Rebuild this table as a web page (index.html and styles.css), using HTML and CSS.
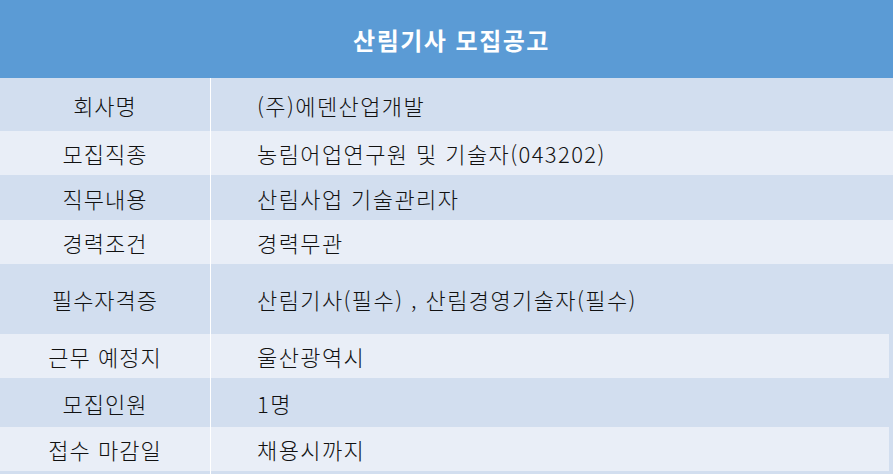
FILE: index.html
```html
<!DOCTYPE html>
<html lang="ko">
<head>
<meta charset="utf-8">
<link rel="stylesheet" href="styles.css">
</head>
<body>
<div class="sheet">
  <div class="head">산림기사 모집공고</div>
  <div class="row dark h53"><div class="lab">회사명</div><div class="val">(주)에덴산업개발</div></div>
  <div class="row light h44"><div class="lab">모집직종</div><div class="val">농림어업연구원 및 기술자(043202)</div></div>
  <div class="row dark h45"><div class="lab">직무내용</div><div class="val">산림사업 기술관리자</div></div>
  <div class="row light h44"><div class="lab">경력조건</div><div class="val">경력무관</div></div>
  <div class="row dark h70"><div class="lab">필수자격증</div><div class="val">산림기사(필수) , 산림경영기술자(필수)</div></div>
  <div class="row light short h44"><div class="lab">근무 예정지</div><div class="val">울산광역시</div></div>
  <div class="row dark h49"><div class="lab">모집인원</div><div class="val">1명</div></div>
  <div class="row light short h44"><div class="lab">접수 마감일</div><div class="val">채용시까지</div></div>
  <div class="row tail"><div class="lab"></div><div class="val"></div></div>
</div>
</body>
</html>
```

FILE: styles.css
```css
html, body {
  margin: 0;
  padding: 0;
  background: #d2deef;
}
.sheet {
  width: 893px;
  height: 474px;
  overflow: hidden;
  background: #d2deef;
  font-family: "Noto Sans CJK KR", "Noto Sans", sans-serif;
  color: #111;
}
.head {
  height: 78px;
  background: #5b9bd5;
  color: #fff;
  font-weight: 700;
  font-size: 24px;
  display: flex;
  align-items: center;
  justify-content: center;
  padding-left: 10px;
  box-sizing: border-box;
  letter-spacing: 1.5px;
}
.row {
  display: flex;
  align-items: stretch;
  font-size: 22px;
  font-weight: 300;
  letter-spacing: 1px;
}
.dark { background: #d2deef; }
.light { background: #e9eef7; }
.short { margin-right: 4px; }
.h53 { height: 53px; }
.h44 { height: 44px; }
.h45 { height: 45px; }
.h49 { height: 49px; }
.h70 { height: 70px; }
.tail { height: 3px; }
.lab {
  width: 210px;
  flex: none;
  border-right: 1px solid #ffffff;
  display: flex;
  align-items: center;
  justify-content: center;
}
.val {
  flex: 1;
  display: flex;
  align-items: center;
  padding-left: 46px;
  letter-spacing: 1.4px;
}
```
